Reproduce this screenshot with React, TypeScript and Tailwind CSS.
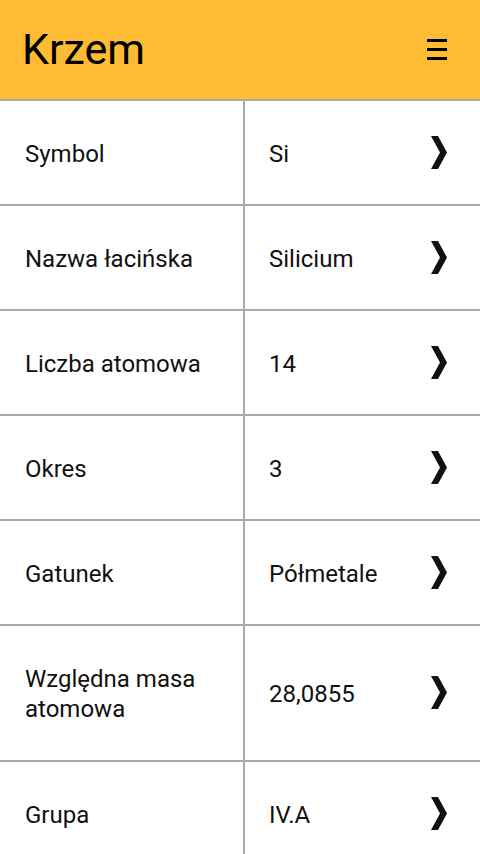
const rows = [
  { label: "Symbol", value: "Si" },
  { label: "Nazwa łacińska", value: "Silicium" },
  { label: "Liczba atomowa", value: "14" },
  { label: "Okres", value: "3" },
  { label: "Gatunek", value: "Półmetale" },
  { label: "Względna masa atomowa", value: "28,0855", tall: true },
  { label: "Grupa", value: "IV.A" },
];

function Chevron() {
  return (
    <svg width="18" height="34" viewBox="0 0 18 34" className="shrink-0">
      <polygon points="1,0 8,0 17,16.5 8,33 1,33 10,16.5" fill="#111" />
    </svg>
  );
}

function Menu() {
  return (
    <svg width="20" height="22" viewBox="0 0 20 22">
      <rect x="0" y="0" width="20" height="3" fill="#000" />
      <rect x="0" y="9" width="20" height="3" fill="#000" />
      <rect x="0" y="18" width="20" height="3" fill="#000" />
    </svg>
  );
}

export default function App() {
  return (
    <div
      className="w-[480px] h-[854px] overflow-hidden bg-white text-black"
      style={{ fontFamily: "Roboto, 'Noto Sans', sans-serif" }}
    >
      <header className="h-[101px] bg-[#ffbb33] border-b-2 border-[#aaaaaa] flex items-center justify-between pl-[22px] pr-[33px]">
        <h1 className="text-[43px] leading-none mt-[0px]">Krzem</h1>
        <div className="pt-[1px]">
          <Menu />
        </div>
      </header>
      {rows.map((r) => (
        <div
          key={r.label}
          className={`flex border-b-2 border-[#aaaaaa] ${r.tall ? "h-[136px]" : "h-[105px]"}`}
        >
          <div className="w-[245px] shrink-0 border-r-2 border-[#aaaaaa] flex items-center pl-[25px] pr-4 pt-[2px] text-[24px] leading-[30px] text-[#111]">
            <span className={r.tall ? "w-[180px]" : ""}>{r.label}</span>
          </div>
          <div className="flex-1 flex items-center justify-between pl-6 pr-[32px] text-[24px] leading-[30px] text-[#111]">
            <span className="pt-[2px]">{r.value}</span>
            <Chevron />
          </div>
        </div>
      ))}
    </div>
  );
}
